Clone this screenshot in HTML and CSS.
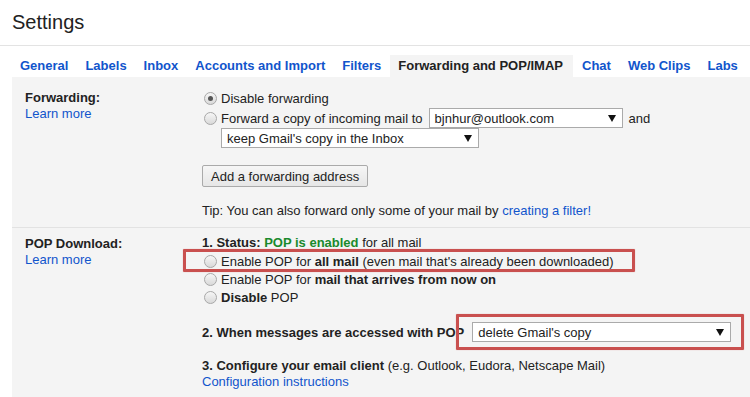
FILE: index.html
```html
<!DOCTYPE html>
<html lang="en">
<head>
  <meta charset="UTF-8" />
  <title>Settings</title>
  <link rel="stylesheet" href="styles.css">
</head>
<body>

  <div class="cabecera">
    <h1>Settings</h1>
  </div>

  <div class="pestanas">
    <a class="pestana">General</a>
    <a class="pestana">Labels</a>
    <a class="pestana">Inbox</a>
    <a class="pestana">Accounts and Import</a>
    <a class="pestana">Filters</a>
    <a class="pestana activa">Forwarding and POP/IMAP</a>
    <a class="pestana">Chat</a>
    <a class="pestana">Web Clips</a>
    <a class="pestana">Labs</a>
  </div>

  <div class="panel">

    <!-- Forwarding -->
    <div class="seccion seccion-reenvio">
      <div class="etiqueta">
        <b>Forwarding:</b>
        <a class="enlace">Learn more</a>
      </div>
      <div class="opciones">
        <div class="fila">
          <span class="radio marcado"></span>Disable forwarding
        </div>
        <div class="fila">
          <span class="radio"></span>Forward a copy of incoming mail to
          <span class="selector selector-correo">bjnhur@outlook.com<i class="flecha"></i></span>
          and
        </div>
        <div class="fila fila-sangria">
          <span class="selector selector-copia">keep Gmail's copy in the Inbox<i class="flecha"></i></span>
        </div>
        <button class="boton">Add a forwarding address</button>
        <p class="consejo">Tip: You can also forward only some of your mail by <a class="enlace">creating a filter!</a></p>
      </div>
    </div>

    <!-- POP -->
    <div class="seccion seccion-pop">
      <div class="etiqueta">
        <b>POP Download:</b>
        <a class="enlace">Learn more</a>
      </div>
      <div class="opciones">
        <div class="linea-estado"><b>1. Status: <span class="verde">POP is enabled</span></b> for all mail</div>
        <div class="fila-pop">
          <span class="radio"></span>Enable POP for&nbsp;<b>all mail</b>&nbsp;(even mail that's already been downloaded)
          <span class="marco marco-fila"></span>
        </div>
        <div class="fila-pop">
          <span class="radio"></span>Enable POP for&nbsp;<b>mail that arrives from now on</b>
        </div>
        <div class="fila-pop">
          <span class="radio"></span><b>Disable</b>&nbsp;POP
        </div>
        <div class="fila fila-acceso">
          <b>2. When messages are accessed with POP</b>
          <span class="envoltura">
            <span class="selector selector-borrar">delete Gmail's copy<i class="flecha"></i></span>
            <span class="marco marco-selector"></span>
          </span>
        </div>
        <div class="linea-cliente"><b>3. Configure your email client</b> (e.g. Outlook, Eudora, Netscape Mail)</div>
        <a class="enlace">Configuration instructions</a>
      </div>
    </div>

  </div>

</body>
</html>
```

FILE: styles.css
```css
body {
  margin: 0;
  font-family: 'Liberation Sans', Arial, sans-serif;
  font-size: 13px;
  color: #222;
  background-color: #ffffff;
  overflow: hidden;
}

.cabecera {
  padding: 10px 12px 11px;
  border-bottom: 1px solid #e3e3e3;
}

.cabecera h1 {
  margin: 0;
  font-size: 20px;
  font-weight: normal;
  line-height: 24px;
  color: #222;
}

.pestanas {
  display: flex;
  margin-top: 9px;
  padding-left: 12px;
  white-space: nowrap;
}

.pestana {
  font-weight: bold;
  color: #15c;
  line-height: 22px;
  padding: 0 8px;
  margin-right: 1px;
}

.pestana.activa {
  background-color: #f4f4f4;
  color: #222;
  padding-right: 10px;
}

.panel {
  margin-left: 12px;
  background-color: #f4f4f4;
  height: 320px;
}

.seccion {
  display: grid;
  grid-template-columns: 177px 1fr;
  padding-left: 13px;
}

.seccion-reenvio {
  padding-top: 11px;
  padding-bottom: 8px;
  border-bottom: 1px solid #e2e2e2;
}

.seccion-pop {
  padding-top: 6px;
}

.etiqueta {
  display: flex;
  flex-direction: column;
  line-height: 16px;
  padding-top: 2px;
}

.enlace {
  color: #15c;
  cursor: pointer;
}

.opciones {
  display: flex;
  flex-direction: column;
  align-items: flex-start;
  white-space: nowrap;
}

.fila {
  display: flex;
  align-items: center;
  height: 20px;
}

.fila-sangria {
  padding-left: 19px;
}

.radio {
  display: inline-block;
  width: 13px;
  height: 13px;
  box-sizing: border-box;
  border-radius: 50%;
  border: 1px solid #a8a8a8;
  background: linear-gradient(#f6f6f6, #d9d9d9);
  margin: 0 4px 0 2px;
  position: relative;
  flex: none;
}

.radio.marcado::after {
  content: "";
  position: absolute;
  left: 3px;
  top: 3px;
  width: 5px;
  height: 5px;
  border-radius: 50%;
  background-color: #555;
}

.selector {
  display: flex;
  align-items: center;
  justify-content: space-between;
  box-sizing: border-box;
  height: 20px;
  padding: 0 6px 0 5px;
  background-color: #fff;
  border: 1px solid #aaa;
  color: #222;
}

.flecha {
  width: 0;
  height: 0;
  border-left: 4px solid transparent;
  border-right: 4px solid transparent;
  border-top: 7px solid #111;
}

.selector-correo {
  width: 194px;
  margin: 0 6px;
}

.selector-copia {
  width: 258px;
}

.selector-borrar {
  width: 259px;
}

.boton {
  margin-top: 17px;
  height: 22px;
  padding: 0 8px;
  font-family: inherit;
  font-size: 13px;
  color: #222;
  background: linear-gradient(#f6f6f6, #e6e6e6);
  border: 1px solid #aaa;
  border-radius: 2px;
}

.consejo {
  margin: 16px 0 0;
  line-height: 16px;
}

.linea-estado {
  line-height: 18px;
}

.verde {
  color: #1a8a2c;
}

.fila-pop {
  display: flex;
  align-items: center;
  height: 18px;
  position: relative;
}

.fila-acceso {
  margin-top: 16px;
}

.envoltura {
  position: relative;
  margin-left: 8px;
}

.marco {
  position: absolute;
  box-sizing: border-box;
  border: 3px solid #c9504f;
  border-radius: 1px;
  box-shadow: 0 0 1px rgba(201, 80, 79, 0.6);
}

.marco-fila {
  left: -19px;
  top: -3px;
  width: 452px;
  height: 23px;
}

.marco-selector {
  left: -16px;
  top: -8px;
  width: 288px;
  height: 36px;
}

.linea-cliente {
  margin-top: 16px;
  line-height: 16px;
}

.opciones > .enlace {
  line-height: 16px;
}
```
